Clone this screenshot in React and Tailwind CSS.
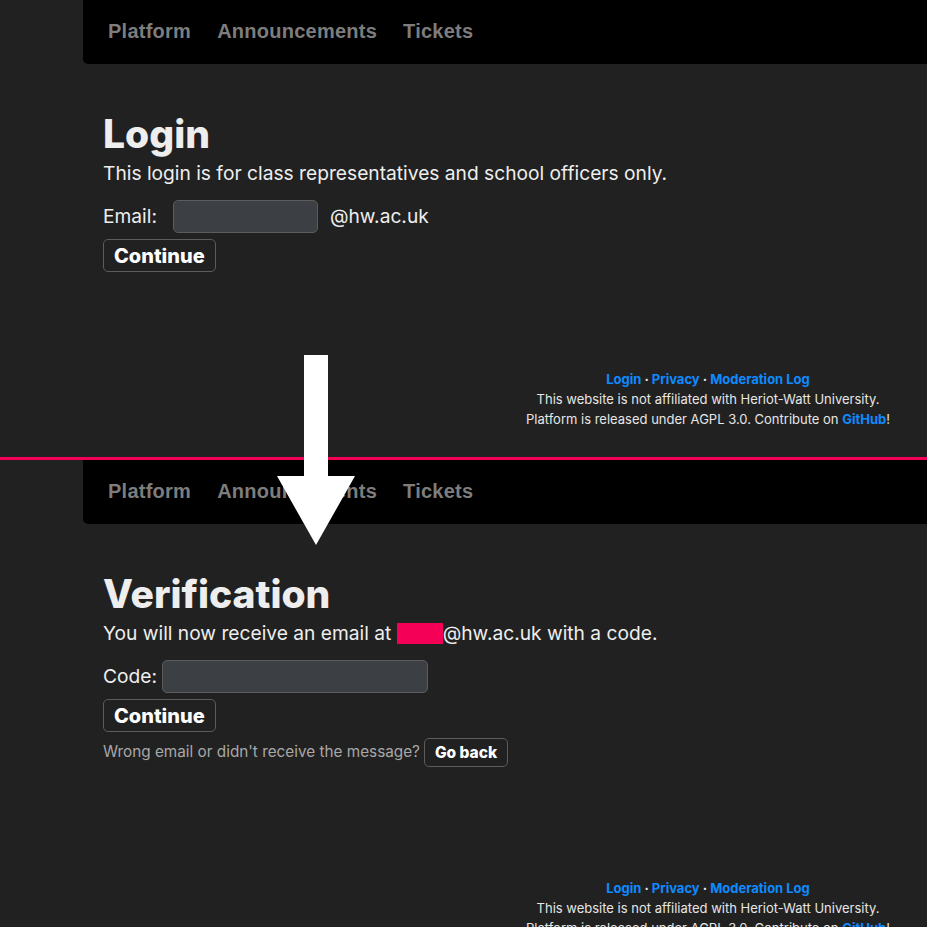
const sans = "font-['Inter','Noto_Sans',sans-serif]";

const Nav = () => (
  <nav className="ml-[83px] flex h-16 items-center rounded-bl-[5px] bg-black pb-[2px] pl-[12px] font-['Liberation_Sans',Arial,sans-serif] text-[20px] font-bold tracking-[0.25px] text-[#7d7d7d]">
    <a className="px-[13px]">Platform</a>
    <a className="px-[13px]">Announcements</a>
    <a className="px-[13px]">Tickets</a>
  </nav>
);

const Footer = ({ className }) => (
  <div className={`flex justify-end ${className}`}>
    <div className="w-[438px] text-center text-[13px] leading-5 text-[#e6e6e6]">
      <div className="font-bold">
        <a className="text-[#0d8bff]">Login</a> · <a className="text-[#0d8bff]">Privacy</a> ·{' '}
        <a className="text-[#0d8bff]">Moderation Log</a>
      </div>
      <div>This website is not affiliated with Heriot-Watt University.</div>
      <div>
        Platform is released under AGPL 3.0. Contribute on <a className="font-bold text-[#0d8bff]">GitHub</a>!
      </div>
    </div>
  </div>
);

const Button = ({ children, small }) => (
  <button
    className={
      small
        ? 'h-[29px] rounded-[5px] border border-[#5c5c5c] px-[10px] text-[15.5px] font-extrabold text-white'
        : 'h-[33px] rounded-[5px] border border-[#5c5c5c] px-[10px] text-[20px] font-extrabold text-white'
    }
  >
    {children}
  </button>
);

const Login = () => (
  <div className="h-[457px] overflow-hidden">
    <Nav />
    <main className="ml-[103px] mt-[46px]">
      <h1 className="text-[39px] leading-[48px] font-extrabold text-[#eeeeee]">Login</h1>
      <p className="text-[19.2px] leading-[30px] text-[#eeeeee]">
        This login is for class representatives and school officers only.
      </p>
      <div className="mt-3 flex items-center text-[19.2px] text-[#eeeeee]">
        <span>Email:</span>
        <input className="ml-[16px] h-[33px] w-[145px] rounded-[5px] border border-[#5c5c5c] bg-[#3c3f43]" />
        <span className="ml-3">@hw.ac.uk</span>
      </div>
      <div className="mt-[6px]">
        <Button>Continue</Button>
      </div>
    </main>
    <Footer className="mt-[97px]" />
  </div>
);

const Verification = () => (
  <div className="h-[467px] overflow-hidden">
    <Nav />
    <main className="ml-[103px] mt-[46px]">
      <h1 className="text-[39px] leading-[48px] font-extrabold text-[#eeeeee]">Verification</h1>
      <p className="flex items-center text-[19.2px] leading-[30px] text-[#eeeeee]">
        You will now receive an email at&nbsp;
        <span className="inline-block h-[21px] w-[46px] bg-[#f50057]" />
        @hw.ac.uk with a code.
      </p>
      <div className="mt-3 flex items-center text-[19.2px] text-[#eeeeee]">
        <span>Code:</span>
        <input className="ml-[5px] h-[33px] w-[266px] rounded-[5px] border border-[#5c5c5c] bg-[#3c3f43]" />
      </div>
      <div className="mt-[6px]">
        <Button>Continue</Button>
      </div>
      <div className="mt-[6px] flex items-center text-[15.3px] text-[#a8a8a8]">
        <span>Wrong email or didn't receive the message?</span>
        <span className="ml-[4px]">
          <Button small>Go back</Button>
        </span>
      </div>
    </main>
    <Footer className="mt-[111px]" />
  </div>
);

export default function App() {
  return (
    <div className={`relative min-h-[927px] overflow-hidden bg-[#212121] ${sans}`}>
      <Login />
      <div className="h-[3px] bg-[#f50057]" />
      <Verification />
      <svg className="absolute left-[276px] top-[355px]" width="80" height="192" viewBox="0 0 80 192">
        <path d="M28 0 H52 V121 H79 L40 190 L1 121 H28 Z" fill="#ffffff" />
      </svg>
    </div>
  );
}
